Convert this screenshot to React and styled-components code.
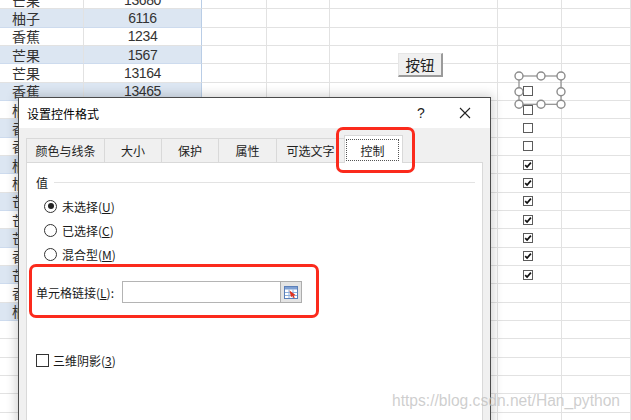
import styled, { createGlobalStyle } from "styled-components";

const GlobalStyle = createGlobalStyle`
  html, body {
    margin: 0;
    padding: 0;
    background: #fff;
    overflow: hidden;
  }
  body {
    font-family: "Noto Sans CJK SC", "Liberation Sans", sans-serif;
  }
`;

const Screen = styled.div`
  position: relative;
  width: 631px;
  height: 420px;
  overflow: hidden;
  background: #fff;
`;

/* ---------- spreadsheet ---------- */

const Sheet = styled.div`
  margin-top: -9px;
  display: grid;
  grid-template-columns: 84px 118px 65px 63px 168px 64px 1fr;
  grid-auto-rows: 18.33px;
`;

const Cell = styled.div`
  box-sizing: border-box;
  display: flex;
  align-items: center;
  justify-content: ${(p) => (p.$center ? "center" : "flex-start")};
  padding-left: ${(p) => p.$pad || 0}px;
  border-right: 1px solid ${(p) => (p.$edge ? "#b9cde6" : "#e2e2e2")};
  border-bottom: 1px solid ${(p) => (p.$blue ? "#cddbee" : "#e2e2e2")};
  background: ${(p) => (p.$blue ? "#dce6f2" : "#fff")};
  color: #333;
  font-size: 14px;
  white-space: nowrap;
  overflow: hidden;
`;

const NumText = styled.span`
  font-family: "Liberation Sans", "Noto Sans CJK SC", sans-serif;
  font-size: 14px;
  letter-spacing: -0.4px;
`;

const SheetBox = styled.span`
  box-sizing: border-box;
  width: 10px;
  height: 10px;
  border: 1px solid #5c5c5c;
  background: #fff;
  display: flex;
  align-items: center;
  justify-content: center;
`;

const SheetButton = styled.div`
  position: absolute;
  left: 398px;
  top: 53px;
  box-sizing: border-box;
  width: 45px;
  height: 24px;
  display: flex;
  align-items: center;
  justify-content: center;
  background: #f0f0f0;
  border-top: 1px solid #e6e6e6;
  border-left: 1px solid #e6e6e6;
  border-right: 2px solid #9a9a9a;
  border-bottom: 2px solid #9a9a9a;
  font-size: 14.5px;
  color: #222;
`;

const Handles = styled.svg`
  position: absolute;
  left: 513px;
  top: 70px;
`;

/* ---------- dialog ---------- */

const Dialog = styled.div`
  position: absolute;
  left: 18px;
  top: 97px;
  width: 473px;
  height: 340px;
  box-sizing: border-box;
  border: 1px solid #4a4a4a;
  background: #f0f0f0;
  box-shadow: 0 0 10px 2px rgba(0, 0, 0, 0.18);
  display: flex;
  flex-direction: column;
  font-size: 12px;
  color: #1a1a1a;
`;

const TitleBar = styled.div`
  height: 30px;
  flex-shrink: 0;
  background: #fff;
  display: flex;
  align-items: center;
  padding: 0 7px 0 8px;
`;

const Title = styled.span`
  font-size: 12px;
  color: #000;
`;

const HelpMark = styled.span`
  margin-left: auto;
  width: 14px;
  margin-right: 19px;
  text-align: center;
  font-family: "Liberation Sans", sans-serif;
  font-size: 14px;
  color: #222;
`;

const CloseBox = styled.span`
  width: 36px;
  display: flex;
  justify-content: center;
`;

const Body = styled.div`
  flex: 1;
  display: flex;
  flex-direction: column;
  padding-top: 10px;
`;

const TabRow = styled.div`
  height: 24px;
  display: flex;
  align-items: flex-end;
  padding-left: 7px;
`;

const Tab = styled.div`
  box-sizing: border-box;
  width: ${(p) => p.$w}px;
  height: 24px;
  margin-right: -1px;
  display: flex;
  align-items: center;
  justify-content: center;
  background: #f0f0f0;
  border: 1px solid #d9d9d9;
  border-bottom: none;
  color: #222;
`;

const ActiveTab = styled(Tab)`
  position: relative;
  z-index: 2;
  height: 28px;
  margin-bottom: -1px;
  background: #fff;
  align-items: stretch;
`;

const FocusRing = styled.span`
  flex: 1;
  margin: 3px 3px 2px 1px;
  border: 1px dotted #555;
  display: flex;
  align-items: center;
  justify-content: center;
`;

const Marker = styled.span`
  position: absolute;
  left: -9px;
  right: -13px;
  top: -9px;
  bottom: -10px;
  border: 3px solid #fb2a1c;
  border-radius: 7px;
  pointer-events: none;
`;

const Panel = styled.div`
  flex: 1;
  margin: 0 7px;
  background: #fff;
  border: 1px solid #d9d9d9;
  padding-left: 9px;
  display: flex;
  flex-direction: column;
`;

const GroupHeader = styled.div`
  margin-top: 11px;
  height: 16px;
  display: flex;
  align-items: center;
  gap: 6px;
  padding-right: 7px;
`;

const GroupLine = styled.span`
  flex: 1;
  height: 1px;
  background: #e3e3e3;
`;

const RadioList = styled.div`
  margin-top: 4px;
  display: flex;
  flex-direction: column;
`;

const RadioRow = styled.div`
  height: 24px;
  display: flex;
  align-items: center;
  gap: 5px;
  padding-left: 8px;
`;

const RadioDot = styled.span`
  box-sizing: border-box;
  width: 13px;
  height: 13px;
  border-radius: 50%;
  border: 1px solid #333;
  background: #fff;
  display: flex;
  align-items: center;
  justify-content: center;

  &::after {
    content: "";
    width: 6px;
    height: 6px;
    border-radius: 50%;
    background: ${(p) => (p.$on ? "#222" : "transparent")};
  }
`;

const LinkRow = styled.div`
  box-sizing: border-box;
  margin: -2px 0 0 -7px;
  width: 290px;
  height: 54px;
  border: 3px solid #fb2a1c;
  border-radius: 7px;
  padding-left: 4px;
  display: flex;
  align-items: center;
`;

const LinkLabel = styled.span`
  width: 86px;
  margin-top: 2px;
`;

const LinkInput = styled.span`
  box-sizing: border-box;
  width: 158px;
  height: 22px;
  margin-top: 2px;
  border: 1px solid #b4b4b4;
  border-right: none;
  background: #fff;
`;

const PickButton = styled.span`
  box-sizing: border-box;
  width: 22px;
  height: 22px;
  margin-top: 2px;
  border: 1px solid #adadad;
  background: #e4e4e4;
  display: flex;
  align-items: center;
  justify-content: center;
`;

const CheckRow = styled.div`
  margin-top: 34px;
  height: 16px;
  display: flex;
  align-items: center;
  gap: 4px;
`;

const CheckBox = styled.span`
  box-sizing: border-box;
  width: 13px;
  height: 13px;
  border: 1px solid #333;
  background: #fff;
`;

const Watermark = styled.div`
  position: absolute;
  left: 392px;
  top: 392px;
  z-index: 5;
  font-family: "Liberation Sans", sans-serif;
  font-size: 15.6px;
  color: rgba(190, 190, 190, 0.75);
  white-space: nowrap;
`;

const rows = [
  ["芒果", "13680"],
  ["柚子", "6116"],
  ["香蕉", "1234"],
  ["芒果", "1567"],
  ["芒果", "13164"],
  ["香蕉", "13465"],
  ["柚子", "2345"],
  ["香蕉", "8790"],
  ["香蕉", "4521"],
  ["柚子", "6116"],
  ["柚子", "3320"],
  ["芒果", "1567"],
  ["芒果", "13164"],
  ["芒果", "9870"],
  ["香蕉", "1234"],
  ["芒果", "13680"],
  ["香蕉", "13465"],
  ["柚子", "6116"],
];

// row index -> checkbox state in column F
const boxes = { 5: false, 6: false, 7: false, 8: false, 9: true, 10: true, 11: true, 12: true, 13: true, 14: true, 15: true };

const tabs = [
  ["颜色与线条", 79],
  ["大小", 58],
  ["保护", 58],
  ["属性", 59],
  ["可选文字", 69],
];

function Tick() {
  return (
    <svg width="8" height="8" viewBox="0 0 8 8">
      <path d="M1.2 4.1 L3.1 6.1 L6.9 1.6" fill="none" stroke="#111" strokeWidth="1.7" />
    </svg>
  );
}

function CellPickIcon() {
  return (
    <svg width="16" height="15" viewBox="0 0 16 15">
      <rect x="1.5" y="1.5" width="13" height="12" fill="#fff" stroke="#5b7fb8" />
      <rect x="2" y="2" width="12" height="2.5" fill="#7d9fd3" />
      <path d="M2 7.5 H14 M2 10.5 H14 M6 4.5 V13 M10 4.5 V13" stroke="#8fb0dd" strokeWidth="1" />
      <path d="M6.5 5.5 L12.5 10 L10.6 10.4 L11.8 12.6 L10.6 13.2 L9.4 11 L8 12.3 Z" fill="#e0321f" />
    </svg>
  );
}

function Row({ index, name, num }) {
  const blue = index % 2 === 1;
  const box = boxes[index];
  return (
    <>
      <Cell $blue={blue} $pad={12}>{name}</Cell>
      <Cell $blue={blue} $edge $center>
        <NumText>{num}</NumText>
      </Cell>
      <Cell />
      <Cell />
      <Cell />
      <Cell $pad={25}>
        {box !== undefined && <SheetBox>{box && <Tick />}</SheetBox>}
      </Cell>
      <Cell />
    </>
  );
}

export default function App() {
  const emptyRows = Array.from({ length: 7 }, (_, i) => i);

  return (
    <Screen>
      <GlobalStyle />
      <Sheet>
        {rows.map(([name, num], i) => (
          <Row key={i} index={i} name={name} num={num} />
        ))}
        {emptyRows.map((i) =>
          Array.from({ length: 7 }, (_, c) => <Cell key={`${i}-${c}`} />)
        )}
      </Sheet>

      <SheetButton>按钮</SheetButton>

      <Handles width="56" height="42" viewBox="0 0 56 42">
        <rect x="6" y="6" width="42" height="28.3" fill="none" stroke="#8c8c8c" strokeWidth="1.2" />
        {[
          [6, 6], [28, 6], [48, 6],
          [6, 21.7], [48, 21.7],
          [6, 34.3], [28, 34.3], [48, 34.3],
        ].map(([cx, cy]) => (
          <circle key={`${cx}-${cy}`} cx={cx} cy={cy} r="4" fill="#fff" stroke="#8c8c8c" strokeWidth="1.4" />
        ))}
      </Handles>

      <Dialog>
        <TitleBar>
          <Title>设置控件格式</Title>
          <HelpMark>?</HelpMark>
          <CloseBox>
            <svg width="12" height="12" viewBox="0 0 12 12">
              <path d="M1 1 L11 11 M11 1 L1 11" stroke="#222" strokeWidth="1.1" />
            </svg>
          </CloseBox>
        </TitleBar>
        <Body>
          <TabRow>
            {tabs.map(([label, w]) => (
              <Tab key={label} $w={w}>{label}</Tab>
            ))}
            <ActiveTab $w={59}>
              <FocusRing>控制</FocusRing>
              <Marker />
            </ActiveTab>
          </TabRow>
          <Panel>
            <GroupHeader>
              值<GroupLine />
            </GroupHeader>
            <RadioList>
              <RadioRow>
                <RadioDot $on />
                <span>未选择(<u>U</u>)</span>
              </RadioRow>
              <RadioRow>
                <RadioDot />
                <span>已选择(<u>C</u>)</span>
              </RadioRow>
              <RadioRow>
                <RadioDot />
                <span>混合型(<u>M</u>)</span>
              </RadioRow>
            </RadioList>
            <LinkRow>
              <LinkLabel>单元格链接(<u>L</u>):</LinkLabel>
              <LinkInput />
              <PickButton>
                <CellPickIcon />
              </PickButton>
            </LinkRow>
            <CheckRow>
              <CheckBox />
              <span>三维阴影(<u>3</u>)</span>
            </CheckRow>
          </Panel>
        </Body>
      </Dialog>

      <Watermark>https://blog.csdn.net/Han_python</Watermark>
    </Screen>
  );
}
